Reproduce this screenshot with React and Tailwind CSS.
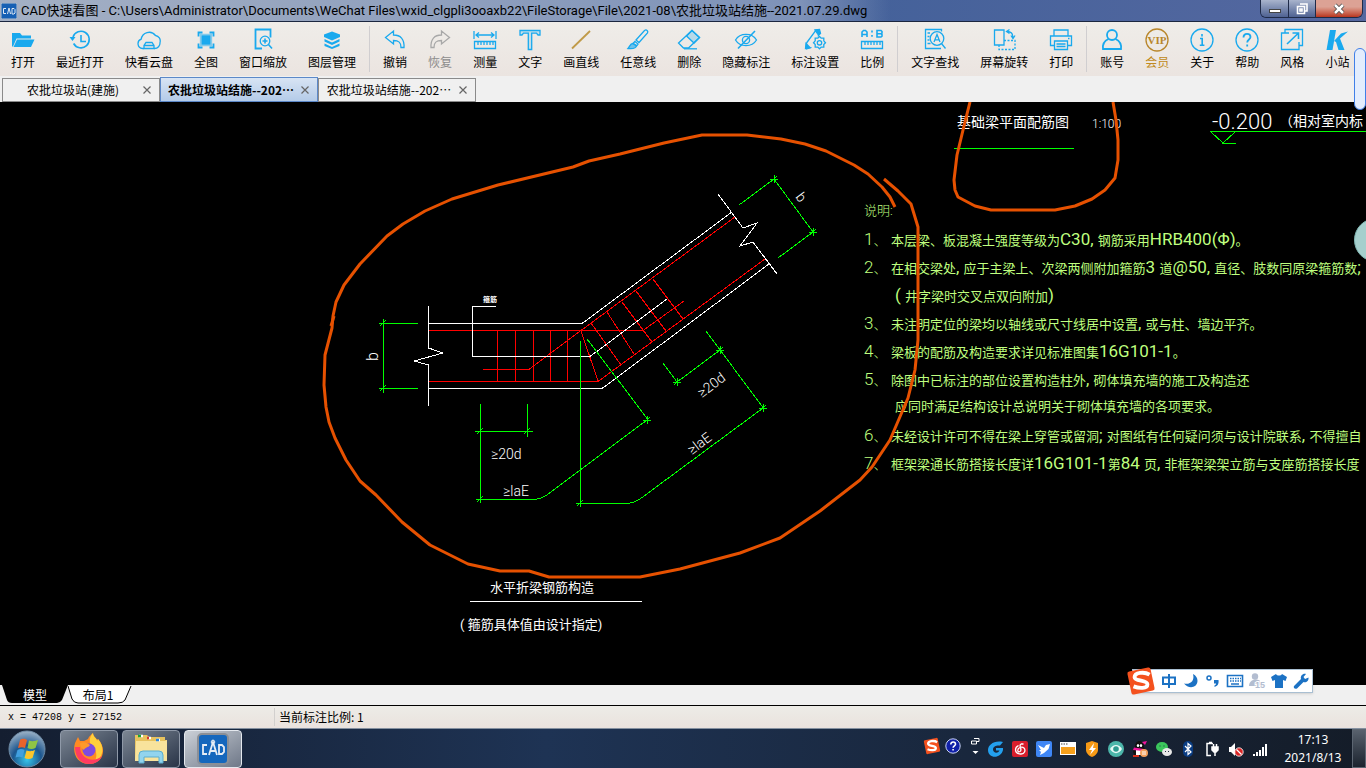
import clsx from 'clsx';

const Icon = ({ children, className }) => (
  <svg
    viewBox="0 0 24 24"
    className={clsx('h-6 w-6', className)}
    fill="none"
    stroke="currentColor"
    strokeWidth="1.3"
    aria-hidden="true"
  >
    {children}
  </svg>
);

const icons = {
  open: (
    <g fill="currentColor" stroke="none">
      <path d="M1 5h8l2 2.5h9v3H5.5L2 18.500H1z" />
      <path d="M6 11.500h17.500L20 19H2.500z" />
    </g>
  ),
  recent: (
    <>
      <path d="M5 9a8.300 8.300 0 1 1 .6 6.500" strokeWidth="1.600" />
      <path d="M1.500 9h6l-3 4z" fill="currentColor" stroke="none" />
      <path d="M13 7v6.500h5" strokeWidth="1.600" />
    </>
  ),
  cloud: (
    <>
      <path d="M7 20.500H5.500a4.800 4.800 0 0 1-1.300-9.300A8 8 0 0 1 18.500 7.500a5.500 5.500 0 0 1 4.500 7 5.500 5.500 0 0 1-5.500 6H17" />
      <path d="M9 14.500h6l2 3v3H7v-3zM7 17.500h10" />
    </>
  ),
  extents: (
    <>
      <path d="M8 8h8v8H8z" fill="currentColor" />
      <path d="M6.500 6.500h11v11h-11z" strokeOpacity=".5" />
      <path d="M8.500 4.500h-4v4M15.500 4.500h4v4M8.500 19.500h-4v-4M15.500 19.500h4v-4" strokeWidth="1.800" />
    </>
  ),
  zoomWin: (
    <>
      <path d="M11 20.500H4.500v-19h15v8" strokeWidth="1.800" />
      <circle cx="14" cy="13" r="4.800" />
      <path d="M11.500 13h5M14 10.500v5M17.500 16.500l3.500 4" strokeWidth="1.600" />
    </>
  ),
  layers: (
    <g fill="currentColor" stroke="none">
      <path d="M12 3.500L20 6.500v2.500L12 12.500 4 9V6.500z" />
      <path d="M4.500 11L12 14.500 19.500 11v2.500L12 17 4.500 13.500z" />
      <path d="M4.500 15.500L12 19l7.500-3.500V18L12 21 4.500 18z" />
    </g>
  ),
  undo: <path d="M2.500 9.500l8-6.500v4c7 0 11 4 10.500 12.500h-3c0-5-2-7-7.500-7v3.500z" />,
  redo: <path d="M21.500 9.500l-8-6.500v4c-7 0-11 4-10.500 12.500h3c0-5 2-7 7.500-7v3.500z" />,
  measure: (
    <>
      <path d="M1 3v8M23 3v8M3 7h18M6 4.500L3 7l3 2.500M18 4.500L21 7l-3 2.500" />
      <path d="M1.500 13.500h21v7h-21zM5 14v3M8 14v3M11 14v3M14 14v3M17 14v3M20 14v3" />
    </>
  ),
  text: <path d="M2 2.500h20v4.500h-2l-1.500-1.800h-4.800V21.500h-3.400V5.200H5.500L4 7H2z" fill="currentColor" fillOpacity=".2" />,
  line: <path d="M3 20.500L21 3" strokeWidth="1.800" />,
  brush: (
    <>
      <path d="M10 12l8.500-9.500c2-1.500 4 .5 3 2.500L13 14.500z" />
      <path d="M9 13.500l3 2.500-1.500 2-3.500-2.500z" />
      <path d="M7 15.500c-3 0-3 3-5 5 4 .5 8 0 8.500-3z" fill="currentColor" fillOpacity=".6" />
    </>
  ),
  eraser: (
    <>
      <path d="M15 2.500l7.500 7-11 10.500H6.500L1.500 15z" />
      <path d="M15 2.500l7.500 7-5.500 5.500-7.500-7z" fill="currentColor" fillOpacity=".25" />
      <path d="M7 20.800h13" />
    </>
  ),
  hide: (
    <>
      <path d="M1.500 12C6 4.500 18 4.500 22.500 12 18 19.500 6 19.500 1.500 12z" />
      <circle cx="12" cy="12" r="3.600" />
      <path d="M4 20.500L21 3" strokeWidth="1.600" />
    </>
  ),
  noteSet: (
    <>
      <path d="M3.500 15L13 2l4 2.500-2 4M3.500 15v6l5-1.500" />
      <path d="M12 2l4.500-.5 1 4-2 1.500z M2.500 20.500l.5-5 4 4z" fill="currentColor" />
      <path d="M16.500 8.500l1.700 1.700h2.600v2.600l1.700 2-1.700 1.700v2.600h-2.600l-1.700 1.700-1.700-1.700h-2.600v-2.600l-1.700-1.700 1.700-2v-2.600h2.600z" />
      <circle cx="16.500" cy="14.800" r="2.200" />
    </>
  ),
  ratio: (
    <>
      <path d="M2 9V4l1.500-1.500h2L7 4v5M2 6.500h5M17 2.500h4l1 1v1.500l-1 .8 1 .9v1.500l-1 .8h-4zM17 5.700h4" strokeWidth="1.600" />
      <path d="M11.200 3.500h1.600M11.200 7.800h1.600" strokeWidth="1.800" />
      <path d="M1.500 13.500h21v7h-21zM5 14v3M8 14v3M11 14v3M14 14v3M17 14v3M20 14v3" />
    </>
  ),
  find: (
    <>
      <path d="M18 20.500H2.500v-19h16v2M4.500 5h2.500M4.500 8.500h2M4.500 12h2M4.500 15.500h3" />
      <circle cx="14" cy="10.500" r="6.800" />
      <path d="M11 14l3-7.500 3 7.500M12 11.800h4M18.500 15.500l4 5" />
    </>
  ),
  rotate: (
    <>
      <path d="M2.500 2h9.500v15H2.500z" />
      <path d="M12 12.500h11v9H7v-4.500" strokeDasharray="2 1.500" />
      <path d="M15 3.500c4 0 6 2.500 6 6M17.500 1.500l-3 2 3 2M19 7.500l2 3 2-3" />
    </>
  ),
  print: (
    <>
      <path d="M5 8V2h14v6M5 17.500H1.500V8h21v9.500H19" />
      <path d="M5.500 13h13v8.500h-13zM7.500 16h9M7.500 18.500h9M19 10.500h1.500" />
    </>
  ),
  account: (
    <>
      <circle cx="12" cy="7" r="5" strokeWidth="1.800" />
      <path d="M8.500 11C4 13 2.500 17 3 21h18c.5-4-1-8-5.500-10" strokeWidth="1.800" />
    </>
  ),
  vip: (
    <>
      <circle cx="12" cy="12" r="11" />
      <text
        x="12"
        y="16"
        textAnchor="middle"
        fill="currentColor"
        stroke="none"
        className="font-['Liberation_Serif',serif] text-[11px] font-bold"
      >
        VIP
      </text>
    </>
  ),
  about: (
    <>
      <circle cx="12" cy="12" r="11" />
      <path d="M12 6v2.500M10 10.500h2.200v6.500M9.800 17.300h4.600" strokeWidth="1.600" />
    </>
  ),
  help: (
    <>
      <circle cx="12" cy="12" r="11" />
      <path d="M8.500 9.500c0-5 7-4.500 7-.5 0 2.500-3.300 2.500-3.300 5.500M12.200 16.500v2" strokeWidth="1.800" />
    </>
  ),
  style: (
    <>
      <path d="M5 5V1.500h17.500v16H19M9 5H1.500v16.500H19V14" />
      <path d="M7 16L18 5.500M12.500 5h6v6" strokeWidth="1.600" />
    </>
  ),
  site: (
    <g fill="currentColor" stroke="none">
      <path d="M5 2h6L7.500 22H1.500z" />
      <path d="M9 13l7-7.500 7-2-8 7 4.500 11.500h-6L11 14z" />
    </g>
  ),
};

const toolGroups = [
  [
    ['open', '打开'],
    ['recent', '最近打开'],
    ['cloud', '快看云盘'],
    ['extents', '全图'],
    ['zoomWin', '窗口缩放'],
    ['layers', '图层管理'],
  ],
  [
    ['undo', '撤销'],
    ['redo', '恢复'],
    ['measure', '测量'],
    ['text', '文字'],
    ['line', '画直线'],
    ['brush', '任意线'],
    ['eraser', '删除'],
    ['hide', '隐藏标注'],
    ['noteSet', '标注设置'],
    ['ratio', '比例'],
  ],
  [
    ['find', '文字查找'],
    ['rotate', '屏幕旋转'],
    ['print', '打印'],
  ],
  [
    ['account', '账号'],
    ['vip', '会员'],
    ['about', '关于'],
    ['help', '帮助'],
    ['style', '风格'],
    ['site', '小站'],
  ],
];

const iconColor = { redo: 'text-[#a8a8a8]', line: 'text-[#c09a48]', vip: 'text-[#b8862b]' };
const labelColor = { redo: 'text-[#8c8c8c]', vip: 'text-[#c08a20]' };

const files = [
  { id: 1, name: '农批垃圾站(建施)' },
  { id: 2, name: '农批垃圾站结施--202…', active: true },
  { id: 3, name: '农批垃圾站结施--202…' },
];

const notes = [
  ['说明:'],
  ['1、', '本层梁、板混凝土强度等级为C30, 钢筋采用HRB400(Φ)。'],
  ['2、', '在相交梁处, 应于主梁上、次梁两侧附加箍筋3 道@50, 直径、肢数同原梁箍筋数;'],
  ['', '( 井字梁时交叉点双向附加)'],
  ['3、', '未注明定位的梁均以轴线或尺寸线居中设置, 或与柱、墙边平齐。'],
  ['4、', '梁板的配筋及构造要求详见标准图集16G101-1。'],
  ['5、', '除图中已标注的部位设置构造柱外, 砌体填充墙的施工及构造还'],
  ['', '应同时满足结构设计总说明关于砌体填充墙的各项要求。'],
  ['6、', '未经设计许可不得在梁上穿管或留洞; 对图纸有任何疑问须与设计院联系, 不得擅自'],
  ['7、', '框架梁通长筋搭接长度详16G101-1第84 页, 非框架梁架立筋与支座筋搭接长度'],
];

// Latin runs are set larger than the Chinese ones, as in the drawing's text style
const Mixed = ({ text }) =>
  text.split(/([A-Z0-9@Φ(),;-]+ ?)/).map((part, i) => (
    <span key={i} className={i % 2 ? 'text-[17px]' : undefined}>
      {part}
    </span>
  ));

function TitleBar() {
  return (
    <header className="flex h-[22px] shrink-0 items-start border-b border-[#1b2740] bg-linear-to-r from-[#8b9bb4] via-[#3e5f98] to-[#5568a0]">
      <div className="flex h-[21px] min-w-0 items-center gap-1 bg-linear-to-r from-[#a4b0c4] via-[#7e92b8] via-90% to-transparent pl-px pr-6">
        <svg viewBox="0 0 16 16" className="h-4 w-4 shrink-0" aria-hidden="true">
          <rect width="16" height="16" rx="1.500" fill="#1660b4" stroke="#b9c3d0" />
          <path d="M5 5.500H2.500v5H5M6.500 11L8 5l1.500 6M11 5.500h2l1 1v3.500l-1 1h-2z" fill="none" stroke="#dfe9f5" />
        </svg>
        <h1 className="truncate font-['Roboto','Noto_Sans_CJK_SC',sans-serif] text-[13px] leading-5 text-black">
          CAD快速看图 - C:\Users\Administrator\Documents\WeChat Files\wxid_clgpli3ooaxb22\FileStorage\File\2021-08\农批垃圾站结施--2021.07.29.dwg
        </h1>
      </div>
      <div className="ml-auto mr-[3px] flex h-[18px] shrink-0 overflow-hidden rounded-b-md border border-t-0 border-[#1e2a48]">
        <button aria-label="最小化" className="flex w-7 items-end justify-center border-r border-[#1e2a48] bg-linear-to-b from-[#a9b4cc] to-[#4f6292] pb-1">
          <span className="h-1 w-3 border border-[#444] bg-white" />
        </button>
        <button aria-label="还原" className="flex w-[27px] items-center justify-center border-r border-[#1e2a48] bg-linear-to-b from-[#a9b4cc] to-[#4f6292]">
          <svg viewBox="0 0 12 12" className="h-3 w-3" aria-hidden="true">
            <path d="M4 1h7v7H9M1.500 3.500h7v7h-7zM4 6h2v2H4z" fill="none" stroke="#fff" strokeWidth="1.600" />
          </svg>
        </button>
        <button aria-label="关闭" className="flex w-[46px] items-center justify-center bg-linear-to-b from-[#dca295] from-40% to-[#b8341c]">
          <svg viewBox="0 0 12 12" className="h-3 w-3" aria-hidden="true">
            <path d="M2 2l8 8M10 2l-8 8" stroke="#444" strokeWidth="4" />
            <path d="M2 2l8 8M10 2l-8 8" stroke="#fff" strokeWidth="2.500" />
          </svg>
        </button>
      </div>
    </header>
  );
}

function Toolbar() {
  return (
    <nav className="flex h-[54px] shrink-0 overflow-hidden bg-linear-to-b from-[#efede9] to-[#ebe4e0] py-1">
      {toolGroups.map((group, g) => (
        <div
          key={g}
          className={clsx('flex shrink-0 gap-[21px] pr-[13px]', g ? 'border-l border-[#d0ced0] pl-[13px]' : 'pl-[11px]')}
        >
          {group.map(([id, label]) => (
            <button key={id} className="flex flex-col items-center gap-0.5 pt-0.5">
              <Icon className={iconColor[id] || 'text-[#19a9ee]'}>{icons[id]}</Icon>
              <span className={clsx('whitespace-nowrap text-[12px] leading-4', labelColor[id] || 'text-black')}>
                {label}
              </span>
            </button>
          ))}
        </div>
      ))}
    </nav>
  );
}

function FileTabs() {
  return (
    <div className="flex h-[26px] shrink-0 items-end bg-[#f0f0f0] pl-0.5">
      {files.map((file) => (
        <div
          key={file.id}
          className={clsx(
            'flex w-[158px] items-center border',
            file.active
              ? 'h-[25px] border-[#5c88c8] bg-linear-to-b from-[#d8e4f4] to-[#b4cbe8] font-bold'
              : 'h-6 border-[#8a8a8a] bg-[#f0f0f0]'
          )}
        >
          <button className="flex-1 whitespace-nowrap pl-0.5 text-center text-[12px] leading-5 text-black">{file.name}</button>
          <button aria-label="关闭标签" className="mr-1.5 p-0.5">
            <svg viewBox="0 0 8 8" className="h-2 w-2" aria-hidden="true">
              <path d="M.5.5l7 7M7.500.5l-7 7" stroke="#666" strokeWidth="1.200" />
            </svg>
          </button>
        </div>
      ))}
    </div>
  );
}

// dimension tick: a small cross with a slash through it
const Tick = ({ x, y }) => <path d={`M${x - 4} ${y}h8M${x} ${y - 4}v8M${x - 3} ${y + 3}l6-6`} />;

function Drawing() {
  return (
    <svg className="absolute inset-0 h-full w-full" fill="none" aria-label="水平折梁钢筋构造">
      <g transform="translate(0 -102)" shapeRendering="crispEdges">
        <g stroke="#ff0000">
          <path d="M429 330.500H643L684 301M483 369.500H529L581 330.500 735 217M429 381.500H598L765 259M581 331L598 381" />
          <path d="M497.500 330v51M515.500 330v51M533.500 330v51M550.500 330v51M567.500 330v51" />
          <path d="M591 323L621 365M607 312L634 354M622 302L652 342M636 291L666 331M653 279L683 319" />
        </g>
        <g stroke="#fff">
          <path d="M428.500 306V348L443 353 414 361 428.500 365V406M718 194L743 228 757 223 740 246 753 242 777 274" />
          <path d="M428 323.500H582L732 212M428 388.500H602L769 264M496 306.500H472.500V356.500H590L667 299" />
          <path d="M470 601.500H642" />
        </g>
        <g stroke="#00ff00">
          <path d="M379 323.500H418M379 388.500H418M383.500 320V393" />
          <path d="M480.500 404V502M527.500 404V437M475 431.500H533M476 499.500H533Q541 499 547 495L647 420M587 339L649 421" />
          <path d="M580.500 341V507M576 503.500H626Q634 503 640 499L763 408M706 331L764 409M663 363L677 382 720 350" />
          <path d="M739 205L774 179 813 232 778 258" />
          <path d="M954 148.500H1074M1210 131.500H3000M1211 132L1223 143 1235 132M1222 143.500H1236" />
          <Tick x={383} y={323} />
          <Tick x={383} y={388} />
          <Tick x={480} y={431} />
          <Tick x={527} y={431} />
          <Tick x={480} y={499} />
          <Tick x={580} y={503} />
          <Tick x={647} y={420} />
          <Tick x={677} y={382} />
          <Tick x={720} y={350} />
          <Tick x={763} y={408} />
          <Tick x={774} y={179} />
          <Tick x={813} y={232} />
        </g>
      </g>
      <g transform="translate(0 -102)" fill="#fff" className="font-['Roboto','Noto_Sans_CJK_SC',sans-serif] font-light">
        <text x="483" y="302" className="text-[7px] font-bold">箍筋</text>
        <text transform="translate(378 361) rotate(-90)" className="text-[16px]">b</text>
        <text transform="translate(795 197) rotate(53)" className="text-[14px]">b</text>
        <text x="491" y="459" className="text-[14px]">≥20d</text>
        <text x="503" y="496" className="text-[14px]">≥laE</text>
        <text transform="translate(702 398) rotate(-37)" className="text-[14px]">≥20d</text>
        <text transform="translate(692 455) rotate(-37)" className="text-[14px]">≥laE</text>
        <g className="font-normal">
          <text x="490" y="592" className="text-[13px]">水平折梁钢筋构造</text>
          <text x="460" y="629" className="text-[13px]">( 箍筋具体值由设计指定)</text>
          <text x="957" y="127" className="text-[14px]">基础梁平面配筋图</text>
        </g>
        <text x="1092" y="128" className="text-[12px]">1:100</text>
        <text x="1212" y="129" className="text-[22px]">-0.200</text>
        <text x="1279" y="126" className="text-[14px] font-normal">（相对室内标</text>
      </g>
    </svg>
  );
}

function Markup() {
  return (
    <svg className="pointer-events-none absolute inset-0 h-full w-full" fill="none" aria-hidden="true">
      <g transform="translate(0 -102)" stroke="#e65100" strokeWidth="3" strokeLinejoin="round">
        <path d="M895 207L890 197 882 187 868 174 854 165 826 151 805 144 781 139 747 135H702L664 143 620 154 589 161 573 167 498 185 452 199 425 211 403 224 387 236 360 264 344 285 336 302 333 316 332 328 325 355 324 385 326 407 329 422 335 438 346 460 360 481 376 495 402 522 430 545 468 564 500 571H529L549 577H640L680 569 740 553 780 538 820 511 860 480 872 467 890 440 908 398 915 370 918 340V227L911 204 898 191 884 179" />
        <path d="M334 316L331 326" />
        <path d="M970 102L964 126 957 155 954 180 955 190 958 197 975 206 991 210H1055L1075 206 1092 199 1105 190 1115 178 1118 160V140L1116 120 1113 102" />
      </g>
    </svg>
  );
}

function Canvas() {
  return (
    <main className="relative min-h-0 flex-1 overflow-hidden bg-black">
      <Drawing />
      <section className="absolute left-[864px] top-[95px] font-['Roboto','Noto_Sans_CJK_SC',sans-serif] text-[13px] font-light leading-7 text-[#bfff7f]">
        {notes.map(([no, body], i) => (
          <p key={i} className="flex h-7 whitespace-pre">
            <span className={body ? 'w-[27px]' : undefined}>
              <Mixed text={no} />
            </span>
            {body && (
              <span className={no ? 'font-normal' : 'pl-1 font-normal'}>
                <Mixed text={body} />
              </span>
            )}
          </p>
        ))}
      </section>
      <Markup />
      <div className="absolute -right-8 top-[116px] h-11 w-11 rounded-full border border-[#7fb5b2] bg-[#a5cfcd]" />
    </main>
  );
}

function LayoutTabs() {
  return (
    <div className="flex h-[21px] shrink-0 border-b border-black bg-[#f0f0f0] pl-0.5 text-[12px] leading-5">
      <button className="relative h-[19px] w-[66px] text-white">
        <svg viewBox="0 0 66 19" className="absolute inset-0 h-full w-full" aria-hidden="true">
          <path d="M0 0H66L60 15Q58 18 55 18H10Q6 18 5 15z" fill="#000" />
        </svg>
        <span className="relative">模型</span>
      </button>
      <button className="relative h-[19px] w-[64px] pr-1 text-black">
        <svg viewBox="0 0 64 19" className="absolute inset-0 h-full w-full" aria-hidden="true">
          <path d="M0 1L4 14Q6 18 10 18H50Q55 18 57 15L63 1" fill="#fff" stroke="#000" />
        </svg>
        <span className="relative">布局1</span>
      </button>
    </div>
  );
}

function StatusBar() {
  return (
    <div className="flex h-[22px] shrink-0 items-center bg-linear-to-b from-[#edece7] to-[#eae2de] text-black">
      <div className="w-[274px] pl-2 font-['Liberation_Mono',monospace] text-[10px]">x = 47208 y = 27152</div>
      <div className="border-l border-[#d2d0ce] pl-1 text-[12px] leading-[18px]">当前标注比例: 1</div>
    </div>
  );
}

const SogouLogo = ({ className }) => (
  <svg viewBox="0 0 28 28" className={className} aria-hidden="true">
    <rect x="3" y="3" width="22" height="22" rx="2" fill="#f4511e" transform="rotate(-12 14 14)" />
    <path
      d="M22 8c-5-3-14-2-14 2.500 0 4 12 2.500 12 6.500 0 4.500-8 4-13 2"
      fill="none"
      stroke="#fff"
      strokeWidth="3.600"
    />
  </svg>
);

const imeTools = [
  ['中文', <path key="p" d="M3 5.500h12v6.500H3zM9 2v14" fill="none" stroke="currentColor" strokeWidth="2" />],
  ['半角', <path key="p" d="M11 2c2 7-3 11-9 9.500C6 17 15 16.500 15.500 9 15.500 6 14 3.500 11 2z" />],
  [
    '标点',
    <g key="p">
      <circle cx="5" cy="6" r="2" fill="none" stroke="currentColor" strokeWidth="1.500" />
      <path d="M10 8h4.500c.5 4-1 6-4 7v-1.500c1-.5 1.500-1 1.500-2h-2z" />
    </g>,
  ],
  [
    '软键盘',
    <g key="p">
      <path d="M1.500 3.500h15v11h-15z" fill="none" stroke="currentColor" strokeWidth="1.600" />
      <path d="M4 6.500h11M4 9h11" stroke="currentColor" strokeWidth="1.500" strokeDasharray="1.500 1" />
      <path d="M5 12h8" stroke="currentColor" strokeWidth="1.500" />
    </g>,
  ],
  [
    '账户',
    <g key="p" className="text-[#b3bdd0]" fill="currentColor">
      <circle cx="7" cy="4.500" r="3.200" />
      <path d="M1 14c0-8 12-8 12-3v3z" />
      <text x="7" y="16" stroke="#fff" strokeWidth="2" paintOrder="stroke" className="font-['Liberation_Sans',sans-serif] text-[9px] font-bold">
        15
      </text>
    </g>,
  ],
  ['皮肤', <path key="p" d="M6 2c1 2 5 2 6 0l5 3-1.500 4L13 8v8H5V8L2.500 9 1 5z" />],
  ['设置', <path key="p" d="M2 14l7-7c-1-3 2-6 5-5l-2.500 3 1.500 2 3.500-1.500c.5 3.500-2.500 5.500-5 4.500l-6.500 6.500c-2 1-4-.5-3-2.500z" />],
];

function ImeBar() {
  return (
    <div className="absolute bottom-[75px] right-[53px] flex h-6 items-center border border-[#a9bfd2] bg-white pl-[25px] text-[#1c72c4] shadow">
      <SogouLogo className="absolute -left-[7px] -top-1 h-[30px] w-[30px]" />
      {imeTools.map(([name, shape]) => (
        <button key={name} aria-label={name} className="flex w-[22px] justify-center">
          <svg viewBox="0 0 18 18" className="h-[18px] w-[18px]" fill="currentColor" aria-hidden="true">
            {shape}
          </svg>
        </button>
      ))}
    </div>
  );
}

const tray = [
  ['腾讯电脑管家', <path key="p" d="M15 1C6-1 0 4 0 9c0 9 13 9 15 0V7H8v2.500h3.500c-2 4-6.500 2-6.500-1C5 5 9 4 12 4.500z" fill="#23a0ee" />],
  [
    '网易云音乐',
    <g key="p">
      <rect width="16" height="16" rx="2" fill="#d81e2c" />
      <path d="M9 3c-3 1 2 6-1 7.500S5 7.500 8 6.500s6 1 4.500 4.500-9 2-9-2c0-2 1-3.500 3-4.500M9 3l2.500 0" fill="none" stroke="#fff" strokeWidth="1.300" />
    </g>,
  ],
  [
    '迅雷',
    <g key="p">
      <rect width="16" height="16" rx="2" fill="#3f86f5" />
      <path d="M2 4l6 3 2-3 4-1-1.500 5L8 12l-4 2 1-3-2-2h2z" fill="#fff" />
    </g>,
  ],
  [
    '窗口',
    <g key="p">
      <path d="M0 1h16v13H0z" fill="#fff" />
      <path d="M1 6h14v7H1z" fill="#f6a01c" />
      <path d="M1 3h7" stroke="#444" strokeDasharray="1.500 1" />
    </g>,
  ],
  [
    '安全',
    <g key="p">
      <path d="M8 0l6 2v7c0 3-3 6-6 7-3-1-6-4-6-7V2z" fill="#f79a16" />
      <path d="M10 2L5 9h3l-2 5 6-7H9z" fill="#fff" />
    </g>,
  ],
  [
    '护眼',
    <g key="p">
      <circle cx="8" cy="8" r="8" fill="#4cb6aa" />
      <path d="M2 8c3-5.500 9-5.500 12 0-3 5.500-9 5.500-12 0z" fill="#e8faf7" />
      <circle cx="8" cy="8" r="2.800" fill="#2e9b90" />
    </g>,
  ],
  [
    'QQ',
    <g key="p">
      <path d="M3 6c0-8 9-8 9 0l2 5-2 4H3l-2-4z" fill="#111" />
      <ellipse cx="6" cy="4.500" rx="1.200" ry="1.600" fill="#fff" />
      <ellipse cx="9" cy="4.500" rx="1.200" ry="1.600" fill="#fff" />
      <path d="M4 9h6v5H4z" fill="#fff" />
      <path d="M2 6.500l10 1.500-1 2-10-1z" fill="#f0149c" />
      <path d="M10 1l5-1-2 4z" fill="#f0149c" />
      <circle cx="12" cy="12" r="4" fill="#f4a15d" />
      <path d="M10 11h4M10 13h4" stroke="#fff" />
      <path d="M1 14h6v2H1z" fill="#d8301c" />
    </g>,
  ],
  [
    '微信',
    <g key="p">
      <ellipse cx="6" cy="6" rx="6" ry="5" fill="#3bc65c" />
      <ellipse cx="11" cy="11" rx="5" ry="4" fill="#e8e8e8" />
      <path d="M4 4.500v1M8 4.500v1M9.500 10v1M12.500 10v1" stroke="#234" />
    </g>,
  ],
  [
    '蓝牙',
    <g key="p">
      <rect x="3" width="10" height="16" rx="5" fill="#0a3d83" />
      <path d="M5 5l6 6-3 2.500v-11L11 5l-6 6" fill="none" stroke="#fff" strokeWidth="1.200" />
    </g>,
  ],
  [
    '电源',
    <g key="p" fill="none" stroke="#fff" strokeWidth="1.500">
      <path d="M7 14.500H3v-12h6M5 1.500h3" />
      <path d="M8 6h6v3l-2 2h-2l-2-2zM9.500 6V3M12.500 6V3M11 11v4" fill="#fff" />
    </g>,
  ],
  [
    '音量',
    <g key="p">
      <path d="M1 6h2l4-4v13l-4-4H1z" fill="#fff" />
      <circle cx="11" cy="11" r="4.200" fill="#d92525" stroke="#fff" strokeWidth=".8" />
      <path d="M8.500 8.500l5 5" stroke="#fff" strokeWidth="1.200" />
    </g>,
  ],
  ['网络', <path key="p" d="M2 13v2M5 11v4M8 9v6M11 6v9M14 3v12" stroke="#fff" strokeWidth="2" />],
];

function Taskbar() {
  const appButton = 'flex h-[38px] w-[58px] items-center justify-center rounded-sm border';
  return (
    <footer className="flex h-10 shrink-0 items-center border-t border-[#8590a0] bg-linear-to-r from-[#141e30] via-[#1e3354] via-40% to-[#141c28]">
      <button aria-label="开始" className="ml-2 mr-3.5">
        <svg viewBox="0 0 38 38" className="h-[38px] w-[38px]" aria-hidden="true">
          <defs>
            <radialGradient id="orb" cx=".5" cy=".8" r=".8">
              <stop offset="0" stopColor="#36c4ea" />
              <stop offset=".5" stopColor="#1c568e" />
              <stop offset="1" stopColor="#9fb4c8" />
            </radialGradient>
          </defs>
          <circle cx="19" cy="19" r="18" fill="url(#orb)" stroke="#6e8ba5" />
          <path d="M12 10c3-2 5-1 7 0l-2 8c-2-1-4-1-7 0z" fill="#e8632b" />
          <path d="M21 10.500c3 1 5 1 9-.5l-2.500 8c-3 1.500-6 1-8 0z" fill="#8fc445" />
          <path d="M9.500 20c3-1.500 5-1 7 0l-2 7.500c-2-1-4-1-7 0z" fill="#41a0e0" />
          <path d="M18.500 20.500c3 1 5 1 8.500-.5l-2.500 8c-3 1.500-6 1-8 0z" fill="#fbc62c" />
        </svg>
      </button>
      <div className="flex gap-1">
        <button aria-label="Firefox" className={clsx(appButton, 'border-[#8f99a8] bg-linear-to-br from-[#7d8794] to-[#2a3548]')}>
          <svg viewBox="0 0 32 32" className="h-8 w-8" aria-hidden="true">
            <path d="M2 10l3-6 2 4h4l4-2c1-3 3-4 5-6 0 4 3 4 4 7l1-1c9 9 6 25-9 25C4 31-1 20 2 10z" fill="#ff8a22" />
            <path d="M20 0c0 4 4 5 4 8l1-2c8 9 4 20-3 22 4-9-2-16-5-18-1-4 1-8 3-10z" fill="#ffd03c" />
            <path d="M2 14c0 10 6 17 14 17 6 0 11-3 13-8-9 8-22 2-22-9z" fill="#ff3b62" />
            <circle cx="16" cy="17" r="6.500" fill="#7d4be0" />
            <path d="M7 10c5-2 7 0 10 2-2 3-5 2-6 5-3-2-4-4-4-7z" fill="#ff9a2a" />
          </svg>
        </button>
        <button aria-label="资源管理器" className={clsx(appButton, 'border-[#8f99a8] bg-linear-to-br from-[#7d8794] to-[#2a3548]')}>
          <svg viewBox="0 0 34 32" className="h-8 w-[34px]" aria-hidden="true">
            <path d="M1 4V2h12l2 2h16v3h2v21H1z" fill="#e7c25e" />
            <path d="M2 8h29l2-1v21H1z" fill="#f8e39c" />
            <path d="M5 3h4M14 5h3M22 7h4" stroke="#fff" strokeWidth="2.500" />
            <path d="M4 3h3" stroke="#19a536" strokeWidth="2.500" />
            <path d="M13 5h2" stroke="#d8392c" strokeWidth="2.500" />
            <path d="M22 7h3" stroke="#2b86e0" strokeWidth="2.500" />
            <path d="M5 30V22q0-4 4-4h16q4 0 4 4v8h-4v-6H10v6z" fill="#92d4ee" stroke="#5aaed0" />
          </svg>
        </button>
        <button aria-label="CAD快速看图" className={clsx(appButton, 'border-[#e4e8ee] bg-linear-to-br from-[#ccd1d8] to-[#6f7888]')}>
          <svg viewBox="0 0 32 32" className="h-8 w-8" aria-hidden="true">
            <rect x="1" y="1" width="30" height="30" rx="4" fill="#1567bd" stroke="#8b8f96" strokeWidth="2" />
            <path d="M10 12H6v9h4M12 22l4-13 4 13M13 18h6M22 12h3l2 2v5l-2 2h-3z" fill="none" stroke="#e6edf5" strokeWidth="1.800" />
            <circle cx="16" cy="9" r="1.800" fill="none" stroke="#e6edf5" />
          </svg>
        </button>
      </div>
      <div className="ml-auto flex h-full items-center">
        <button aria-label="搜狗输入法" className="w-[22px] pb-1.5">
          <SogouLogo className="h-[18px] w-[18px]" />
        </button>
        <button aria-label="帮助" className="w-[22px] pb-1.5">
          <svg viewBox="0 0 16 16" className="h-4 w-4" aria-hidden="true">
            <circle cx="8" cy="8" r="7.200" fill="#1020a8" stroke="#c8d2f4" />
            <path d="M5.800 6.500c0-3.500 4.700-3 4.700-.3 0 1.500-2.400 1.800-2.400 3.500M8.100 11v1.500" fill="none" stroke="#fff" strokeWidth="1.600" />
          </svg>
        </button>
        <button aria-label="选项" className="w-[17px] pb-1.5">
          <svg viewBox="0 0 9 18" className="mx-1 h-[18px] w-[9px]" fill="none" stroke="#fff" aria-hidden="true">
            <path d="M3 1.500h5v3H6M.5 4h5v3h-5z" />
            <path d="M1.500 14h6l-3 3z" fill="#fff" stroke="none" />
          </svg>
        </button>
        <div className="flex">
          {tray.map(([name, shape]) => (
            <button key={name} aria-label={name} className="flex w-6 justify-center">
              <svg viewBox="0 0 16 16" className="h-4 w-4" aria-hidden="true">
                {shape}
              </svg>
            </button>
          ))}
        </div>
        <div className="mx-1.5 w-[68px] pl-0.5 text-center font-['Noto_Sans',sans-serif] text-[12px] leading-[18px] text-white">
          <div>17:13</div>
          <div>2021/8/13</div>
        </div>
        <button aria-label="显示桌面" className="h-full w-[14px] border border-[#5c6672] bg-linear-to-b from-[#59626e] to-[#1c242f]" />
      </div>
    </footer>
  );
}

export default function App() {
  return (
    <div
      lang="zh-CN"
      className="relative flex h-screen w-full flex-col overflow-hidden bg-[#f0f0f0] font-['Noto_Sans_CJK_SC',sans-serif]"
    >
      <TitleBar />
      <Toolbar />
      <FileTabs />
      <Canvas />
      <LayoutTabs />
      <StatusBar />
      <Taskbar />
      <ImeBar />
      <div className="absolute right-0 top-12 h-[62px] w-3 rounded-full border border-[#3f7fe8] bg-[#e3edfd]" />
    </div>
  );
}
